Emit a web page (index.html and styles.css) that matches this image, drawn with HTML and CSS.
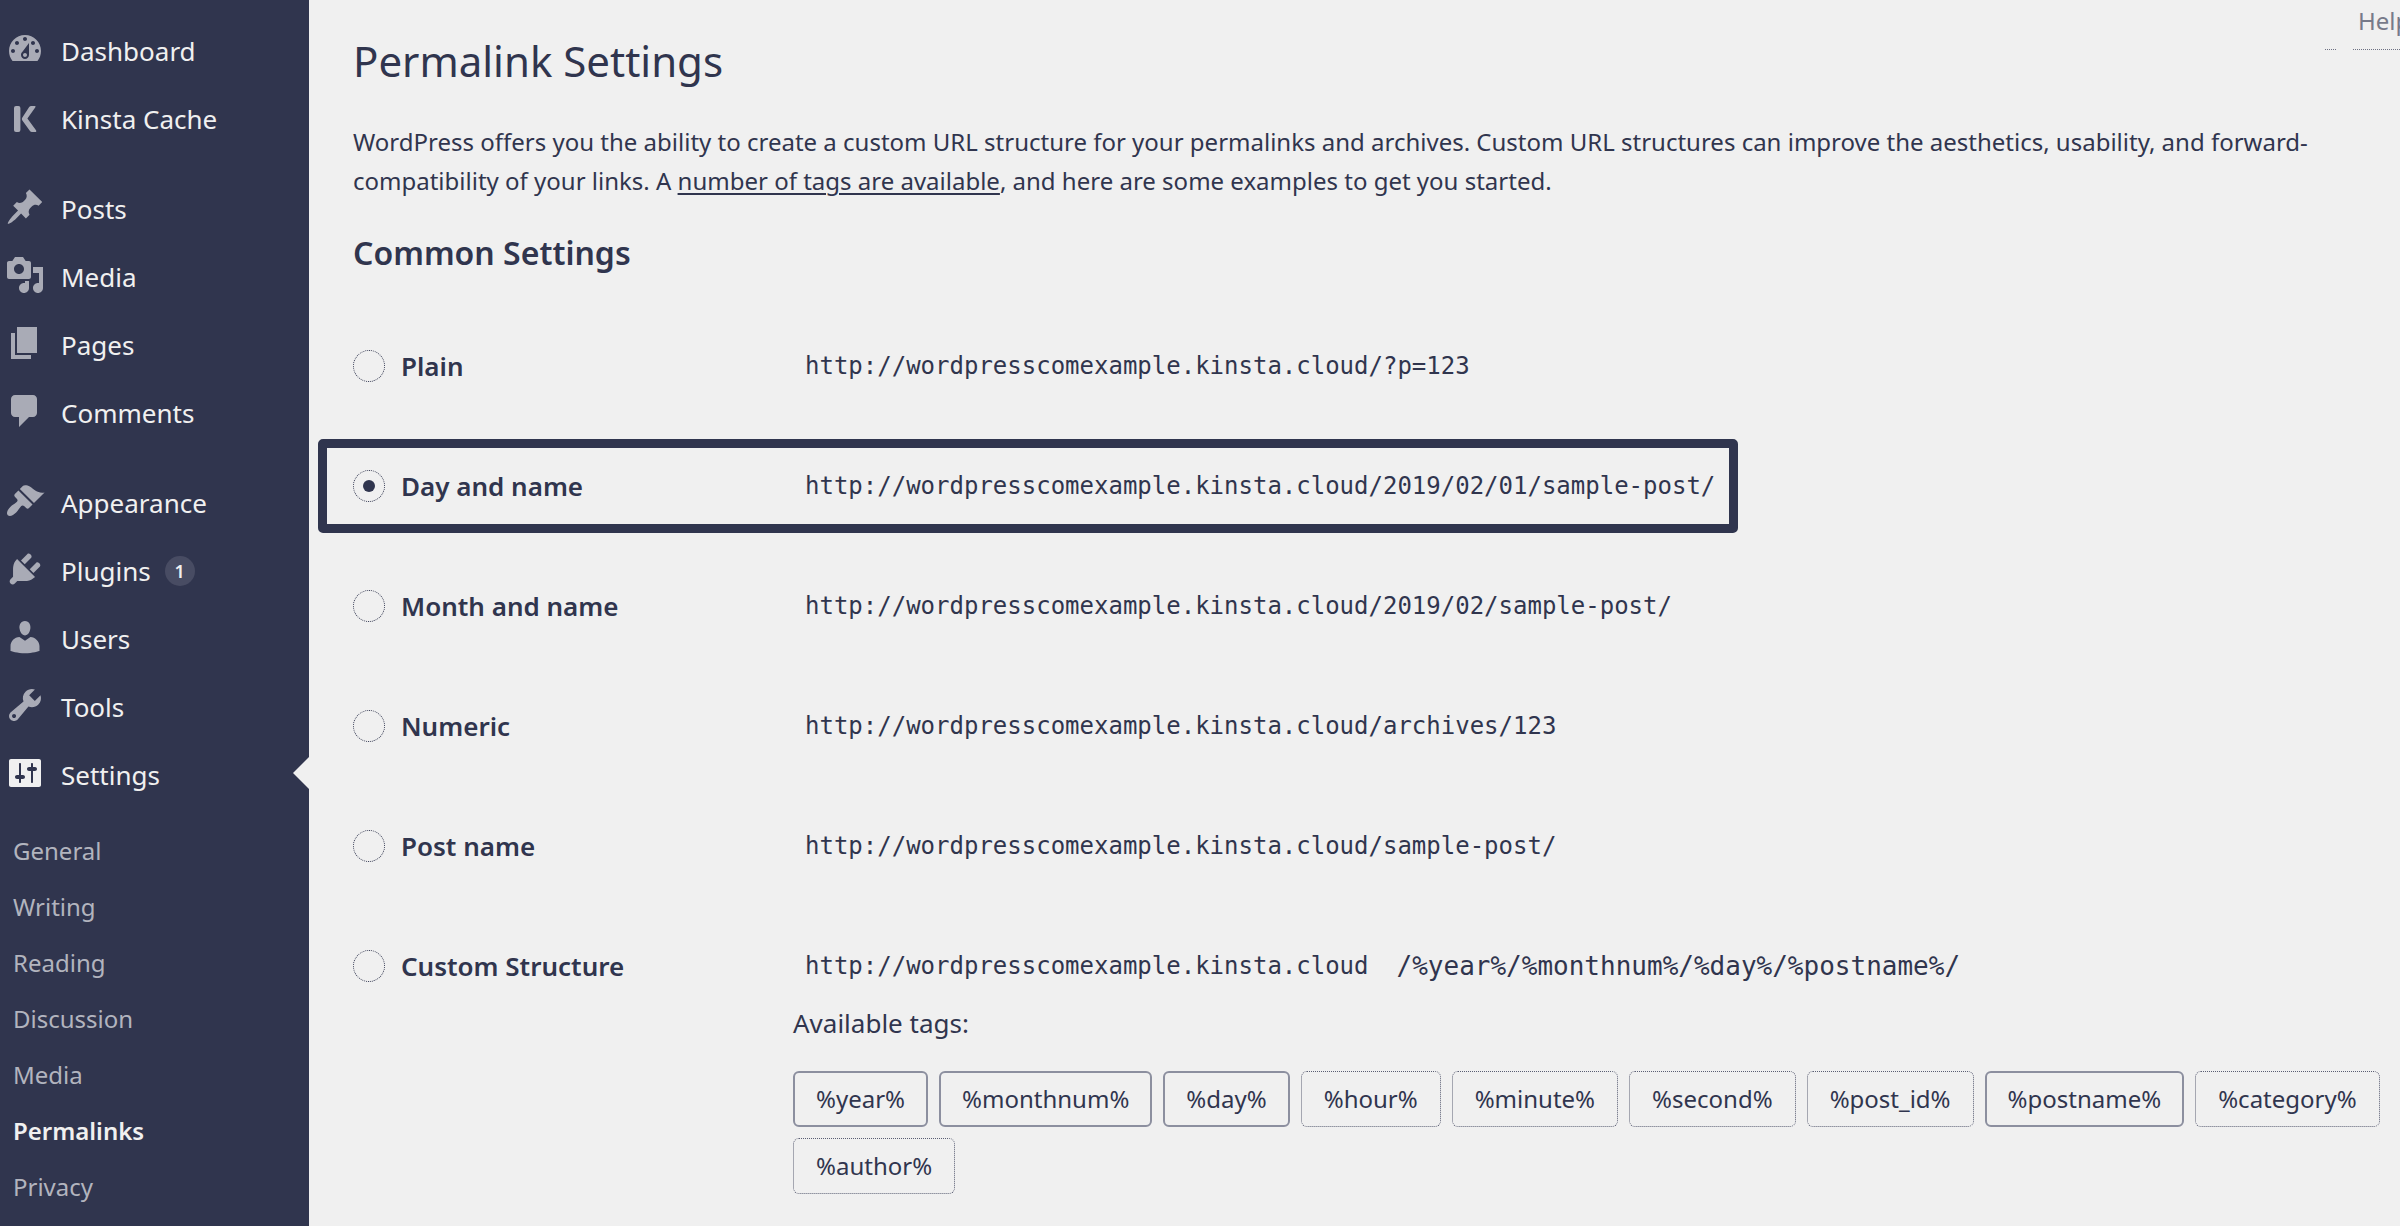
FILE: index.html
```html
<!DOCTYPE html>
<html lang="en">
<head>
<meta charset="utf-8">
<title>Permalink Settings</title>
<link rel="stylesheet" href="styles.css">
</head>
<body>
<div class="layout">
  <nav class="sidebar" aria-label="Main menu">
    <ul class="menu">
      <li><a class="menu-item" href="#"><svg class="icon" viewBox="0 0 20 20" aria-hidden="true"><path fill-rule="evenodd" d="M3.76 16h12.48c1.1-1.37 1.76-3.11 1.76-5 0-4.42-3.58-8-8-8s-8 3.58-8 8c0 1.89.66 3.63 1.76 5zM10 4c.55 0 1 .45 1 1s-.45 1-1 1-1-.45-1-1 .45-1 1-1zM6 6c.55 0 1 .45 1 1s-.45 1-1 1-1-.45-1-1 .45-1 1-1zm8 0c.55 0 1 .45 1 1s-.45 1-1 1-1-.45-1-1 .45-1 1-1zm-5.37 5.55L12 7v6c0 1.1-.9 2-2 2s-2-.9-2-2c0-.57.24-1.08.63-1.45zM4 10c.55 0 1 .45 1 1s-.45 1-1 1-1-.45-1-1 .45-1 1-1zm12 0c.55 0 1 .45 1 1s-.45 1-1 1-1-.45-1-1 .45-1 1-1zm-5 3c0-.55-.45-1-1-1s-1 .45-1 1 .45 1 1 1 1-.45 1-1z"/></svg>Dashboard</a></li>
      <li><a class="menu-item" href="#"><svg class="icon" viewBox="0 0 20 20" aria-hidden="true"><path d="M5.500 4.500h1.200q1 0 1 1v11q0 1-1 1H5.500q-1 0-1-1v-11q0-1 1-1zM12.100 5q.4-.5 1-.5h1.700q.9 0 .3.700L11.200 10.800l4.300 5.800q.5.900-.5.900h-1.500q-.7 0-1.100-.6L8.600 11.600q-.4-.6 0-1.200z"/></svg>Kinsta Cache</a></li>
      <li class="group-start"><a class="menu-item" href="#"><svg class="icon" viewBox="0 0 20 20" aria-hidden="true"><path d="M10.440 3.020l1.820-1.820 6.360 6.350-1.830 1.820c-1.050-.68-2.480-.57-3.410.36l-.75.75c-.92.93-1.040 2.350-.35 3.410l-1.830 1.820-2.410-2.410-2.800 2.790c-.42.42-3.380 2.710-3.800 2.290s1.860-3.390 2.280-3.810l2.790-2.790L4.100 9.360l1.830-1.820c1.050.69 2.480.57 3.400-.36l.75-.75c.93-.92 1.050-2.350.36-3.410z"/></svg>Posts</a></li>
      <li><a class="menu-item" href="#"><svg class="icon" viewBox="0 0 20 20" aria-hidden="true"><path fill-rule="evenodd" d="M13 11V4c0-.55-.45-1-1-1h-1.670L9 1H5L3.670 3H2c-.55 0-1 .45-1 1v7c0 .55.45 1 1 1h10c.55 0 1-.45 1-1zM7 4.500c1.380 0 2.500 1.120 2.500 2.500S8.380 9.500 7 9.500 4.500 8.380 4.500 7 5.620 4.500 7 4.500zM14 6h5v10.500c0 1.380-1.120 2.500-2.500 2.500S14 17.880 14 16.500s1.120-2.500 2.500-2.500c.17 0 .34.02.5.05V9h-3V6zm-4 8.050V13h2v3.500c0 1.380-1.120 2.500-2.500 2.500S7 17.880 7 16.500 8.120 14 9.500 14c.17 0 .34.02.5.05z"/></svg>Media</a></li>
      <li><a class="menu-item" href="#"><svg class="icon" viewBox="0 0 20 20" aria-hidden="true"><path d="M6 15V2h10v13H6zm-1 1h8v2H3V5h2v11z"/></svg>Pages</a></li>
      <li><a class="menu-item" href="#"><svg class="icon" viewBox="0 0 20 20" aria-hidden="true"><path d="M5 2h9c1.100 0 2 .9 2 2v7c0 1.100-.9 2-2 2h-2l-5 5v-5H5c-1.100 0-2-.9-2-2V4c0-1.100.9-2 2-2z"/></svg>Comments</a></li>
      <li class="group-start"><a class="menu-item" href="#"><svg class="icon" viewBox="0 0 20 20" aria-hidden="true"><path d="M14.480 11.060L7.410 3.990l1.500-1.500c.5-.56 2.300-.47 3.510.32 1.210.8 1.430 1.280 2.910 2.100 1.180.64 2.450 1.260 4.450.85zm-.71.71L6.700 4.700 4.930 6.470c-.39.39-.39 1.020 0 1.410l1.060 1.060c.39.39.39 1.030 0 1.420-.6.6-1.430 1.110-2.210 1.690-.35.26-.7.53-1.010.84C1.430 14.230.4 16.080 1.400 17.070c.99 1 2.840-.03 4.180-1.360.31-.31.58-.66.85-1.020.57-.78 1.080-1.610 1.690-2.210.39-.39 1.020-.39 1.410 0l1.060 1.060c.39.39 1.020.39 1.410 0z"/></svg>Appearance</a></li>
      <li><a class="menu-item" href="#"><svg class="icon" viewBox="0 0 20 20" aria-hidden="true"><path d="M13.110 4.360L9.870 7.600 8 5.730l3.240-3.240c.35-.34 1.050-.2 1.560.32.52.51.66 1.210.31 1.550zm-8 1.770l.91-1.120 9.010 9.010-1.190.84c-.71.71-2.630 1.160-3.820 1.160H6.140L4.900 17.260c-.59.59-1.540.59-2.120 0-.59-.58-.59-1.530 0-2.120l1.240-1.240v-3.880c0-1.130.4-3.190 1.090-3.890zm7.260 3.970l3.240-3.240c.34-.35 1.040-.21 1.550.31.52.51.66 1.210.31 1.550l-3.240 3.250z"/></svg>Plugins<span class="badge">1</span></a></li>
      <li><a class="menu-item" href="#"><svg class="icon" viewBox="0 0 20 20" aria-hidden="true"><path d="M10 9.250c-2.270 0-2.730-3.440-2.730-3.440C7 4.020 7.820 2 9.970 2c2.160 0 2.980 2.020 2.710 3.810 0 0-.41 3.440-2.680 3.440zm0 2.570L12.720 10c2.390 0 4.520 2.330 4.520 4.530v2.490s-3.650 1.130-7.240 1.130c-3.650 0-7.240-1.130-7.240-1.130v-2.490c0-2.250 1.940-4.480 4.470-4.480z"/></svg>Users</a></li>
      <li><a class="menu-item" href="#"><svg class="icon" viewBox="0 0 20 20" aria-hidden="true"><path fill-rule="evenodd" d="M16.680 9.770c-1.340 1.340-3.300 1.670-4.950.99l-5.410 6.520c-.99.99-2.590.99-3.580 0s-.99-2.590 0-3.570l6.520-5.420c-.68-1.650-.35-3.610.99-4.950 1.280-1.280 3.120-1.620 4.720-1.060l-2.890 2.890 2.820 2.820 2.860-2.870c.53 1.580.18 3.390-1.080 4.650zM3.810 16.210c.4.39 1.040.39 1.430 0 .4-.4.4-1.040 0-1.430-.39-.4-1.030-.4-1.430 0-.39.39-.39 1.030 0 1.430z"/></svg>Tools</a></li>
      <li>
        <a class="menu-item is-current" href="#"><svg class="icon" viewBox="0 0 20 20" aria-hidden="true"><path fill-rule="evenodd" d="M18 16V4c0-.55-.45-1-1-1H3c-.55 0-1 .45-1 1v12c0 .55.45 1 1 1h14c.55 0 1-.45 1-1zM8 11h1c.55 0 1 .45 1 1s-.45 1-1 1H8v1.500c0 .28-.22.5-.5.5s-.5-.22-.5-.5V13H6c-.55 0-1-.45-1-1s.45-1 1-1h1V5.500c0-.28.22-.5.5-.5s.5.22.5.5V11zm5-2h-1c-.55 0-1-.45-1-1s.45-1 1-1h1V5.500c0-.28.22-.5.5-.5s.5.22.5.5V7h1c.55 0 1 .45 1 1s-.45 1-1 1h-1v5.500c0 .28-.22.5-.5.5s-.5-.22-.5-.5V9z"/></svg>Settings</a>
        <ul class="submenu">
          <li><a href="#">General</a></li>
          <li><a href="#">Writing</a></li>
          <li><a href="#">Reading</a></li>
          <li><a href="#">Discussion</a></li>
          <li><a href="#">Media</a></li>
          <li><a href="#" class="is-active" aria-current="page">Permalinks</a></li>
          <li><a href="#">Privacy</a></li>
        </ul>
      </li>
    </ul>
  </nav>

  <main class="content">
    <header class="page-head">
      <h1>Permalink Settings</h1>
      <div class="screen-links">
        <span class="screen-tab"></span>
        <button type="button" class="help">Help</button>
      </div>
    </header>
    <p class="intro">WordPress offers you the ability to create a custom URL structure for your permalinks and archives. Custom URL structures can improve the aesthetics, usability, and forward-compatibility of your links. A <a href="#">number of tags are available</a>, and here are some examples to get you started.</p>
    <h2>Common Settings</h2>

    <form class="options">
      <div class="option">
        <label class="choice"><input type="radio" name="structure">Plain</label>
        <code>http://wordpresscomexample.kinsta.cloud/?p=123</code>
      </div>
      <div class="option is-highlighted">
        <label class="choice"><input type="radio" name="structure" checked>Day and name</label>
        <code>http://wordpresscomexample.kinsta.cloud/2019/02/01/sample-post/</code>
      </div>
      <div class="option">
        <label class="choice"><input type="radio" name="structure">Month and name</label>
        <code>http://wordpresscomexample.kinsta.cloud/2019/02/sample-post/</code>
      </div>
      <div class="option">
        <label class="choice"><input type="radio" name="structure">Numeric</label>
        <code>http://wordpresscomexample.kinsta.cloud/archives/123</code>
      </div>
      <div class="option">
        <label class="choice"><input type="radio" name="structure">Post name</label>
        <code>http://wordpresscomexample.kinsta.cloud/sample-post/</code>
      </div>
      <div class="option is-custom">
        <label class="choice"><input type="radio" name="structure">Custom Structure</label>
        <div class="custom">
          <code>http://wordpresscomexample.kinsta.cloud</code>
          <input type="text" class="custom-input" aria-label="Custom structure" value="/%year%/%monthnum%/%day%/%postname%/">
        </div>
      </div>
      <div class="available">
        <p>Available tags:</p>
        <div class="tags">
          <button type="button" class="tag is-used">%year%</button>
          <button type="button" class="tag is-used">%monthnum%</button>
          <button type="button" class="tag is-used">%day%</button>
          <button type="button" class="tag">%hour%</button>
          <button type="button" class="tag">%minute%</button>
          <button type="button" class="tag">%second%</button>
          <button type="button" class="tag">%post_id%</button>
          <button type="button" class="tag is-used">%postname%</button>
          <button type="button" class="tag">%category%</button>
          <button type="button" class="tag">%author%</button>
        </div>
      </div>
    </form>
  </main>
</div>
</body>
</html>
```
FILE: styles.css
```css
:root {
  --navy: #30354e;
  --paper: #f0f0f0;
  --sans: "Noto Sans", "Open Sans", sans-serif;
  --mono: "DejaVu Sans Mono", "Liberation Mono", monospace;
}

* { box-sizing: border-box; }

body {
  margin: 0;
  background: var(--paper);
  color: var(--navy);
  font: 24px/39px var(--sans);
}

h1, h2, p, ul { margin: 0; padding: 0; }
ul { list-style: none; }
button, input { font: inherit; color: inherit; margin: 0; }

.layout {
  display: grid;
  grid-template-columns: 309px minmax(0, 1fr);
  min-height: 100vh;
}

/* Sidebar */
.sidebar {
  background: var(--navy);
  padding: 17px 0 11px;
}

.menu-item {
  display: flex;
  align-items: center;
  position: relative;
  height: 68px;
  padding-left: 5px;
  color: var(--paper);
  font-size: 26px;
  text-decoration: none;
}

.group-start { margin-top: 22px; }

.icon {
  width: 40px;
  height: 40px;
  margin: 0 16px 4px 0;
  fill: #a9abb6;
}

.is-current .icon { fill: var(--paper); }

.is-current::after {
  content: "";
  position: absolute;
  right: 0;
  top: 16px;
  border: 16px solid transparent;
  border-left: 0;
  border-right-color: var(--paper);
}

.badge {
  width: 30px;
  height: 30px;
  margin-left: 14px;
  border-radius: 50%;
  background: #484c63;
  font-size: 18px;
  font-weight: 600;
  line-height: 30px;
  text-align: center;
}

.submenu { padding-top: 14px; }

.submenu a {
  display: block;
  padding-left: 13px;
  color: #b2b4be;
  font-size: 24px;
  line-height: 56px;
  text-decoration: none;
}

.submenu .is-active {
  color: var(--paper);
  font-weight: 600;
}

/* Content */
.content { padding-left: 44px; overflow: hidden; }

.page-head {
  display: flex;
  justify-content: space-between;
  align-items: flex-start;
}

h1 {
  padding-top: 31px;
  font-size: 42px;
  font-weight: 400;
  line-height: 60px;
}

.screen-links { display: flex; gap: 17px; }

.screen-tab, .help {
  height: 50px;
  border: 0;
  border-bottom: 1px dotted #6e7183;
}

.screen-tab { width: 11px; }

.help {
  width: 47px;
  padding: 0 0 8px 5px;
  overflow: hidden;
  background: none;
  color: #777a8a;
  text-align: left;
}

.intro { margin: 31px 44px 0 0; }
.intro a { color: inherit; text-decoration-thickness: 2px; text-underline-offset: 3px; }

h2 {
  margin-top: 33px;
  font-size: 32px;
  font-weight: 600;
  line-height: 40px;
}

.options { margin-top: 46px; }

.option {
  display: grid;
  grid-template-columns: 440px auto;
  align-items: center;
  width: fit-content;
  margin: 0 0 26px -35px;
  padding: 20px 2px 20px 26px;
  border: 9px solid transparent;
  border-radius: 5px;
  line-height: 36px;
}

.is-highlighted { border-color: var(--navy); }

.is-custom { margin-bottom: 0; padding-bottom: 0; border-bottom: 0; }

.choice {
  display: flex;
  align-items: center;
  gap: 16px;
  font-size: 26px;
  font-weight: 600;
}

.choice input {
  appearance: none;
  display: grid;
  place-items: center;
  width: 32px;
  height: 32px;
  border: 1px dotted var(--navy);
  border-radius: 50%;
}

.choice input:checked::before {
  content: "";
  width: 12px;
  height: 12px;
  border-radius: 50%;
  background: var(--navy);
}

code {
  padding: 0 12px;
  font: 24px/36px var(--mono);
}

.custom { display: flex; align-items: center; gap: 6px; }

.custom-input {
  width: 600px;
  height: 36px;
  padding: 0 10px;
  border: 0;
  background: none;
  font: 26px/36px var(--mono);
}

.available { padding: 21px 11px 0 440px; }
.available p { font-size: 26px; line-height: 36px; }

.tags {
  display: flex;
  flex-wrap: wrap;
  gap: 11px;
  margin-top: 30px;
}

.tag {
  height: 56px;
  padding: 0 22px;
  border: 1px dotted #5a5e73;
  border-radius: 6px;
  background: none;
  line-height: 36px;
}

.tag.is-used { border: 2px solid #8c8f9f; padding: 0 21px; }
```
